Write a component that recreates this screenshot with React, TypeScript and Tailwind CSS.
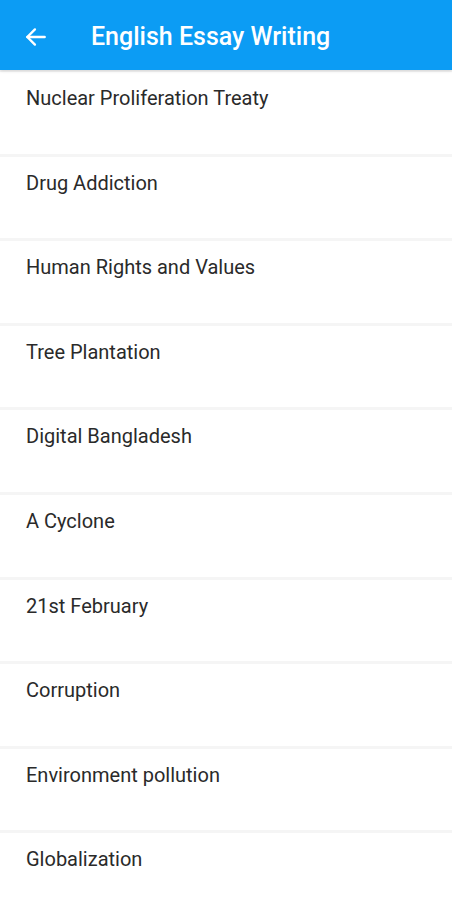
import React from "react";

const items = [
  "Nuclear Proliferation Treaty",
  "Drug Addiction",
  "Human Rights and Values",
  "Tree Plantation",
  "Digital Bangladesh",
  "A Cyclone",
  "21st February",
  "Corruption",
  "Environment pollution",
  "Globalization",
];

export default function App() {
  return (
    <div className="w-[452px] h-[900px] overflow-hidden bg-white" style={{ fontFamily: "Roboto, 'Noto Sans', sans-serif" }}>
      <div className="relative z-10 h-[70px] bg-[#0c9cf4] flex items-center shadow-[0_1px_3px_rgba(0,0,0,0.15)]">
        <div className="w-[91px] flex items-center pl-[23px] pt-[3px]">
          <svg width="26" height="26" viewBox="0 0 24 24" fill="none" stroke="white" strokeWidth="2.2" strokeLinecap="round" strokeLinejoin="round">
            <path d="M20 12H4" />
            <path d="M11 5l-7 7 7 7" />
          </svg>
        </div>
        <div className="text-white text-[25px] font-medium leading-none pt-[3px]">English Essay Writing</div>
      </div>
      <div className="-mt-[1px] flex flex-col">
        {items.map((t) => (
          <div key={t} className="h-[84.6px] shrink-0 border-t-[3px] border-[#f5f5f5] pl-[26px] pt-[14px]">
            <div className="text-[20px] leading-[24px] text-[#2a2a2a]">{t}</div>
          </div>
        ))}
      </div>
    </div>
  );
}
